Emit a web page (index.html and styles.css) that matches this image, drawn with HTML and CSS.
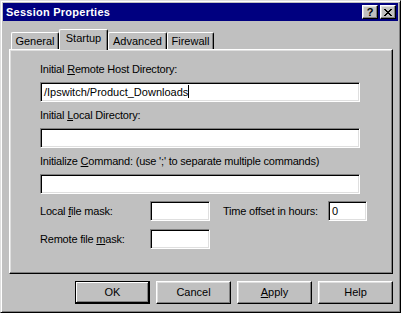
FILE: index.html
```html
<!DOCTYPE html>
<html lang="en">
<head>
    <meta charset="UTF-8">
    <title>Session Properties</title>
    <link rel="stylesheet" href="styles.css">
</head>
<body>

    <div class="window">
        <!-- Title bar -->
        <div class="titlebar">
            <span class="title">Session Properties</span>
            <div class="title-buttons">
                <span class="title-btn help-btn">?</span>
                <span class="title-btn">
                    <svg width="8" height="7" viewBox="0 0 8 7" shape-rendering="crispEdges">
                        <path d="M0 0h2v1h-2zM6 0h2v1h-2zM1 1h2v1h-2zM5 1h2v1h-2zM2 2h4v1h-4zM3 3h2v1h-2zM2 4h4v1h-4zM1 5h2v1h-2zM5 5h2v1h-2zM0 6h2v1h-2zM6 6h2v1h-2z" fill="#000"/>
                    </svg>
                </span>
            </div>
        </div>

        <div class="content">
            <!-- Tabs -->
            <div class="tabs">
                <div class="tab tab-general">General</div>
                <div class="tab tab-startup selected">Startup</div>
                <div class="tab tab-advanced">Advanced</div>
                <div class="tab tab-firewall">Firewall</div>
            </div>

            <!-- Startup page -->
            <div class="panel">
                <label class="field-label">Initial <u>R</u>emote Host Directory:</label>
                <div class="textbox wide">/Ipswitch/Product_Downloads<span class="caret"></span></div>

                <label class="field-label">Initial <u>L</u>ocal Directory:</label>
                <div class="textbox wide"></div>

                <label class="field-label">Initialize <u>C</u>ommand: (use ';' to separate multiple commands)</label>
                <div class="textbox wide"></div>

                <div class="mask-grid">
                    <span>Local <u>f</u>ile mask:</span>
                    <div class="textbox mask"></div>
                    <span></span>
                    <span>Time offset in hours:</span>
                    <div class="textbox offset">0</div>

                    <span>Remote file <u>m</u>ask:</span>
                    <div class="textbox mask"></div>
                </div>
            </div>

            <!-- Dialog buttons -->
            <div class="dialog-buttons">
                <div class="button default">OK</div>
                <div class="button">Cancel</div>
                <div class="button"><u>A</u>pply</div>
                <div class="button">Help</div>
            </div>
        </div>
    </div>

</body>
</html>
```

FILE: styles.css
```css
body {
    margin: 0;
    font-family: "Liberation Sans", Arial, sans-serif;
    font-size: 11px;
    color: #000;
    background: #c0c0c0;
}

/* Window frame */
.window {
    width: 401px;
    height: 313px;
    box-sizing: border-box;
    background: #c0c0c0;
    border: 1px solid;
    border-color: #dfdfdf #000 #000 #dfdfdf;
    box-shadow: inset 1px 1px #fff, inset -1px -1px #808080;
    padding: 2px;
    display: flex;
    flex-direction: column;
}

.titlebar {
    height: 18px;
    background: #000080;
    display: flex;
    align-items: center;
    justify-content: space-between;
    padding: 0 2px 0 3px;
}
.title {
    color: #fff;
    font-weight: bold;
    letter-spacing: 0.25px;
    line-height: 13px;
}
.title-buttons {
    display: flex;
    gap: 2px;
}
.title-btn {
    width: 16px;
    height: 14px;
    box-sizing: border-box;
    background: #c0c0c0;
    border: 1px solid;
    border-color: #fff #000 #000 #fff;
    box-shadow: inset -1px -1px #808080, inset 1px 1px #dfdfdf;
    display: flex;
    align-items: center;
    justify-content: center;
}
.help-btn {
    font-weight: bold;
    font-size: 11px;
    line-height: 11px;
}

.content {
    padding: 8px 5px 0 6px;
}

/* Tabs */
.tabs {
    display: flex;
    align-items: flex-end;
    height: 21px;
    margin-left: 2px;
    margin-bottom: -1px;
    position: relative;
    z-index: 1;
}
.tab {
    height: 17px;
    box-sizing: border-box;
    border-top: 1px solid #fff;
    border-left: 1px solid #fff;
    border-right: 1px solid #000;
    border-radius: 2px 2px 0 0;
    box-shadow: inset -1px 0 #808080;
    background: #c0c0c0;
    text-align: center;
    line-height: 15px;
    padding-top: 1px;
    margin-bottom: 1px;
}
.tab.selected {
    height: 21px;
    margin-bottom: 0;
    padding-top: 0;
    line-height: 16px;
}
.tab-general { width: 48px; }
.tab-startup { width: 49px; }
.tab-advanced { width: 59px; }
.tab-firewall { width: 47px; }

.panel {
    width: 384px;
    height: 225px;
    box-sizing: border-box;
    border: 1px solid;
    border-color: #fff #000 #000 #fff;
    box-shadow: inset -1px -1px #808080, inset 1px 1px #dfdfdf;
    padding: 13px 0 0 30px;
}

.field-label {
    display: block;
    line-height: 13px;
    letter-spacing: -0.2px;
}

/* Sunken edit boxes */
.textbox {
    height: 20px;
    box-sizing: border-box;
    background: #fff;
    border: 1px solid;
    border-color: #808080 #fff #fff #808080;
    box-shadow: inset 1px 1px #000, inset -1px -1px #dfdfdf;
    padding: 0 3px;
    line-height: 18px;
    white-space: nowrap;
}
.textbox.wide {
    width: 320px;
    margin: 6px 0 7px;
}
.caret {
    display: inline-block;
    width: 1px;
    height: 13px;
    background: #000;
    vertical-align: -2px;
}

.mask-grid {
    display: grid;
    grid-template-columns: 110px 60px 13px 105px 39px;
    row-gap: 8px;
    align-items: center;
    letter-spacing: -0.2px;
}
.textbox.mask { width: 60px; }
.textbox.offset { width: 39px; }

/* Bottom buttons */
.dialog-buttons {
    width: 384px;
    display: flex;
    justify-content: flex-end;
    gap: 6px;
    margin-top: 7px;
}
.button {
    width: 75px;
    height: 23px;
    box-sizing: border-box;
    border: 1px solid;
    border-color: #fff #000 #000 #fff;
    box-shadow: inset -1px -1px #808080, inset 1px 1px #dfdfdf;
    text-align: center;
    line-height: 21px;
}
.button.default {
    border-color: #000;
    box-shadow: inset -1px -1px #000, inset 1px 1px #fff, inset -2px -2px #808080;
}
```
